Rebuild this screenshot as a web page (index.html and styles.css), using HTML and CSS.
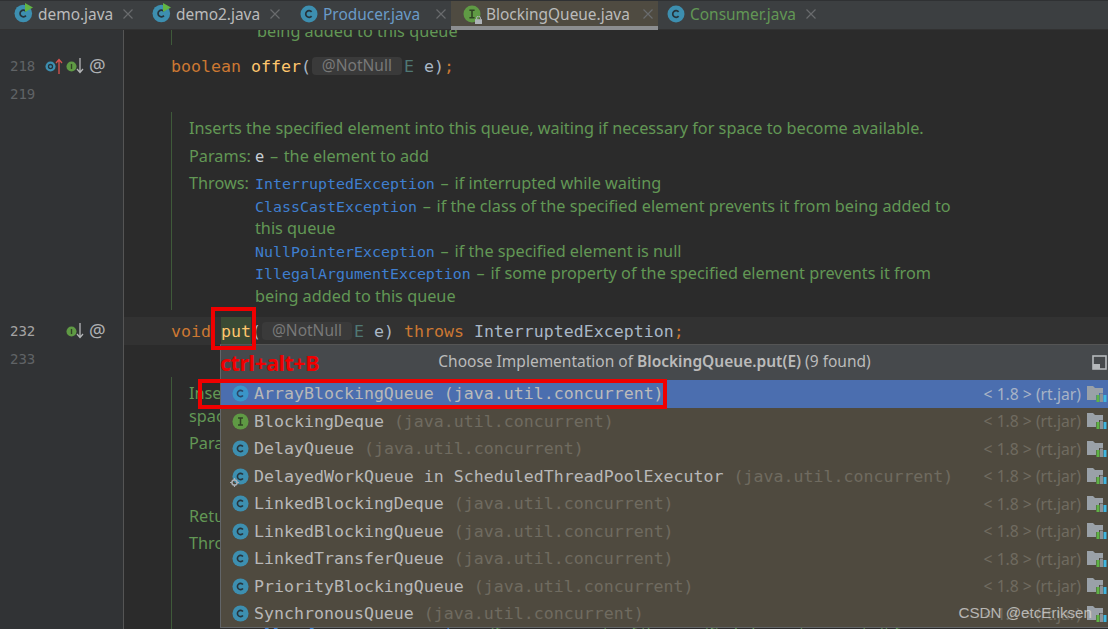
FILE: index.html
```html
<!DOCTYPE html>
<html lang="en">
<head>
<meta charset="utf-8">
<title>BlockingQueue.java</title>
<link rel="stylesheet" href="styles.css">
</head>
<body>
<svg class="defs" xmlns="http://www.w3.org/2000/svg">
  <symbol id="ic-c" viewBox="0 0 18 18"><circle cx="9" cy="9" r="8.5" fill="#3d8fb0"/><path d="M11.6 6.9A3.3 3.3 0 1 0 11.6 11.1" fill="none" stroke="#26343c" stroke-width="1.7"/></symbol>
  <symbol id="ic-c-sel" viewBox="0 0 18 18"><circle cx="9" cy="9" r="8.5" fill="#3a95c8"/><path d="M11.6 6.9A3.3 3.3 0 1 0 11.6 11.1" fill="none" stroke="#2b4566" stroke-width="1.7"/></symbol>
  <symbol id="ic-i" viewBox="0 0 18 18"><circle cx="9" cy="9" r="8.5" fill="#5f9a44"/><path d="M6.4 5.2h5.2M6.4 12.8h5.2M9 5.2v7.6" fill="none" stroke="#2f4224" stroke-width="1.6"/></symbol>
  <symbol id="ic-run" viewBox="0 0 20 20"><circle cx="9.3" cy="10.5" r="8.8" fill="#3d8fb0"/><path d="M11.9 8.4A3.3 3.3 0 1 0 11.9 12.6" fill="none" stroke="#26343c" stroke-width="1.7"/><path d="M11 0v9l8-4.5z" fill="#62b543"/></symbol>
  <symbol id="ic-lock" viewBox="0 0 7 8"><rect x="0" y="3.2" width="7" height="4.8" fill="#aeb3b8"/><path d="M1.6 3.4V2a1.9 1.9 0 0 1 3.8 0v1.4" fill="none" stroke="#aeb3b8"/></symbol>
  <symbol id="ic-x" viewBox="0 0 10 10"><path d="M.5.5l9 9M9.5.5l-9 9" stroke="#696b6d" stroke-width="1.2" fill="none"/></symbol>
  <symbol id="ic-folder" viewBox="0 0 20 16"><path d="M0 0h6l2 2h8v5h-4v2h-3v5H0z" fill="#9aa1a8"/><rect x="9.5" y="9" width="3" height="7" fill="#5fb347"/><rect x="13" y="7.5" width="3" height="8.5" fill="#8b9096"/><rect x="16.5" y="9" width="3" height="7" fill="#40b6e0"/></symbol>
  <symbol id="ic-gear" viewBox="0 0 9 9"><circle cx="4.5" cy="4.5" r="2.6" fill="none" stroke="#aab0b6" stroke-width="1.5"/><path d="M4.5 0v2M4.5 7v2M0 4.5h2M7 4.5h2" stroke="#aab0b6" stroke-width="1.2"/></symbol>
</svg>

<div class="app">
  <nav class="tabs">
    <div class="tab tab-a"><svg class="tab-run"><use href="#ic-run"/></svg><span class="tab-name">demo.java</span><svg class="tab-x"><use href="#ic-x"/></svg></div>
    <div class="tab tab-b"><svg class="tab-run"><use href="#ic-run"/></svg><span class="tab-name">demo2.java</span><svg class="tab-x"><use href="#ic-x"/></svg></div>
    <div class="tab tab-c"><svg class="tab-icon"><use href="#ic-c"/></svg><span class="tab-name blue">Producer.java</span><svg class="tab-x"><use href="#ic-x"/></svg></div>
    <div class="tab tab-d active"><span class="tab-iconwrap"><svg class="tab-icon"><use href="#ic-i"/></svg><svg class="tab-lock"><use href="#ic-lock"/></svg></span><span class="tab-name">BlockingQueue.java</span><svg class="tab-x"><use href="#ic-x"/></svg></div>
    <div class="tab tab-e"><svg class="tab-icon"><use href="#ic-c"/></svg><span class="tab-name green">Consumer.java</span><svg class="tab-x"><use href="#ic-x"/></svg></div>
  </nav>

  <main class="editor">
    <aside class="gutter">
      <div class="gutter-row">
        <span class="ln">218</span>
        <span class="marks">
          <svg class="m-circle" viewBox="0 0 12 12"><circle cx="6" cy="6" r="5.5" fill="#3d8fb0"/><circle cx="6" cy="6" r="2.2" fill="none" stroke="#26343c" stroke-width="1.4"/></svg>
          <svg class="m-arrow" viewBox="0 0 8 16"><path d="M4 16V2M1 5l3-3.5L7 5" fill="none" stroke="#d9534f" stroke-width="1.3"/></svg>
          <svg class="m-circle m-gap" viewBox="0 0 12 12"><circle cx="6" cy="6" r="5.5" fill="#5f9a44"/><path d="M6 3.2v5.6" stroke="#2f4224" stroke-width="1.5"/></svg>
          <svg class="m-arrow" viewBox="0 0 8 16"><path d="M4 0v14M1 11l3 3.5L7 11" fill="none" stroke="#b4b6b8" stroke-width="1.3"/></svg>
          <span class="at">@</span>
        </span>
      </div>
      <div class="gutter-row"><span class="ln">219</span></div>
      <div class="gutter-gap"></div>
      <div class="gutter-row">
        <span class="ln current">232</span>
        <span class="marks marks-indent">
          <svg class="m-circle" viewBox="0 0 12 12"><circle cx="6" cy="6" r="5.5" fill="#5f9a44"/><path d="M6 3.2v5.6" stroke="#2f4224" stroke-width="1.5"/></svg>
          <svg class="m-arrow" viewBox="0 0 8 16"><path d="M4 0v14M1 11l3 3.5L7 11" fill="none" stroke="#b4b6b8" stroke-width="1.3"/></svg>
          <span class="at">@</span>
        </span>
      </div>
      <div class="gutter-row"><span class="ln">233</span></div>
    </aside>

    <section class="code">
      <div class="doc doc-top"><div class="doc-tail">being added to this queue</div></div>

      <div class="line"><span class="kw">boolean</span> <span class="fn">offer</span><span class="pn">(</span><span class="hint">@NotNull</span><span class="ty">E</span> <span class="pn">e)</span><span class="kw">;</span></div>
      <div class="line"></div>

      <div class="doc doc-mid">
        <p>Inserts the specified element into this queue, waiting if necessary for space to become available.</p>
        <div class="doc-field"><span>Params:</span><div><div><span class="arg">e</span> <span class="sep">–</span> the element to add</div></div></div>
        <div class="doc-field"><span>Throws:</span><div>
          <div><span class="lnk">InterruptedException</span> <span class="sep">–</span> if interrupted while waiting</div>
          <div><span class="lnk">ClassCastException</span> <span class="sep">–</span> if the class of the specified element prevents it from being added to</div>
          <div>this queue</div>
          <div><span class="lnk">NullPointerException</span> <span class="sep">–</span> if the specified element is null</div>
          <div><span class="lnk">IllegalArgumentException</span> <span class="sep">–</span> if some property of the specified element prevents it from</div>
          <div>being added to this queue</div>
        </div></div>
      </div>

      <div class="line current-line"><span class="kw">void</span> <span class="fn put">put</span><span class="pn">(</span><span class="hint">@NotNull</span><span class="ty">E</span> <span class="pn">e)</span> <span class="kw">throws</span> <span class="pn">InterruptedException</span><span class="kw">;</span></div>
      <div class="line-empty"></div>

      <div class="doc doc-low">
        <p class="tight">Inserts the specified element into this queue, waiting up to the specified wait time if necessary for</p>
        <p>space to become available.</p>
        <div class="doc-field"><span>Params:</span><div>
          <div><span class="arg">e</span> <span class="sep">–</span> the element to add</div>
          <div><span class="arg">timeout</span> <span class="sep">–</span> how long to wait before giving up</div>
          <div><span class="arg">unit</span> <span class="sep">–</span> a TimeUnit determining how to interpret the timeout parameter</div>
        </div></div>
        <p>Returns: true if successful, or false if the specified waiting time elapses</p>
        <div class="doc-field"><span>Throws:</span><div>
          <div><span class="lnk">InterruptedException</span> <span class="sep">–</span> if interrupted while waiting</div>
          <div><span class="lnk">ClassCastException</span> <span class="sep">–</span> if the class of the specified element prevents it</div>
          <div>this queue</div>
          <div><span class="lnk">NullPointerException</span> <span class="sep">–</span> if the specified element is null</div>
          <div><span class="lnk">IllegalArgumentException</span> <span class="sep">–</span> if some property of the specified element prevents it from</div>
        </div></div>
      </div>
    </section>
  </main>

  <div class="popup">
    <header class="popup-head">
      <span class="popup-title">Choose Implementation of <b>BlockingQueue.put(E)</b> (9 found)</span>
      <svg class="popup-pin" viewBox="0 0 15 15"><rect x="1" y="1" width="13" height="13" fill="none" stroke="#b5b8bb" stroke-width="1.6"/><rect x="1" y="9" width="7" height="5" fill="#b5b8bb"/></svg>
    </header>
    <ul class="popup-list">
      <li class="row selected"><svg class="row-icon"><use href="#ic-c-sel"/></svg><span class="row-name">ArrayBlockingQueue</span><span class="row-pkg">(java.util.concurrent)</span><span class="row-lib">&lt; 1.8 &gt; (rt.jar)</span><svg class="row-folder"><use href="#ic-folder"/></svg></li>
      <li class="row"><svg class="row-icon"><use href="#ic-i"/></svg><span class="row-name">BlockingDeque</span><span class="row-pkg">(java.util.concurrent)</span><span class="row-lib">&lt; 1.8 &gt; (rt.jar)</span><svg class="row-folder"><use href="#ic-folder"/></svg></li>
      <li class="row"><svg class="row-icon"><use href="#ic-c"/></svg><span class="row-name">DelayQueue</span><span class="row-pkg">(java.util.concurrent)</span><span class="row-lib">&lt; 1.8 &gt; (rt.jar)</span><svg class="row-folder"><use href="#ic-folder"/></svg></li>
      <li class="row"><span class="row-iconwrap"><svg class="row-icon"><use href="#ic-c"/></svg><svg class="row-gear"><use href="#ic-gear"/></svg></span><span class="row-name">DelayedWorkQueue in ScheduledThreadPoolExecutor</span><span class="row-pkg">(java.util.concurrent)</span><span class="row-lib">&lt; 1.8 &gt; (rt.jar)</span><svg class="row-folder"><use href="#ic-folder"/></svg></li>
      <li class="row"><svg class="row-icon"><use href="#ic-c"/></svg><span class="row-name">LinkedBlockingDeque</span><span class="row-pkg">(java.util.concurrent)</span><span class="row-lib">&lt; 1.8 &gt; (rt.jar)</span><svg class="row-folder"><use href="#ic-folder"/></svg></li>
      <li class="row"><svg class="row-icon"><use href="#ic-c"/></svg><span class="row-name">LinkedBlockingQueue</span><span class="row-pkg">(java.util.concurrent)</span><span class="row-lib">&lt; 1.8 &gt; (rt.jar)</span><svg class="row-folder"><use href="#ic-folder"/></svg></li>
      <li class="row"><svg class="row-icon"><use href="#ic-c"/></svg><span class="row-name">LinkedTransferQueue</span><span class="row-pkg">(java.util.concurrent)</span><span class="row-lib">&lt; 1.8 &gt; (rt.jar)</span><svg class="row-folder"><use href="#ic-folder"/></svg></li>
      <li class="row"><svg class="row-icon"><use href="#ic-c"/></svg><span class="row-name">PriorityBlockingQueue</span><span class="row-pkg">(java.util.concurrent)</span><span class="row-lib">&lt; 1.8 &gt; (rt.jar)</span><svg class="row-folder"><use href="#ic-folder"/></svg></li>
      <li class="row"><svg class="row-icon"><use href="#ic-c"/></svg><span class="row-name">SynchronousQueue</span><span class="row-pkg">(java.util.concurrent)</span><span class="row-lib">&lt; 1.8 &gt; (rt.jar)</span><svg class="row-folder"><use href="#ic-folder"/></svg></li>
    </ul>
  </div>

  <div class="mark-put"></div>
  <div class="mark-row"></div>
  <div class="mark-label">ctrl+alt+B</div>
  <div class="watermark">CSDN @etcEriksen</div>
</div>
</body>
</html>
```

FILE: styles.css
```css
* { box-sizing: border-box; }
html, body { margin: 0; height: 100%; }
body { background: #2b2b2b; overflow: hidden; font-family: "Noto Sans", sans-serif; }
.defs { display: none; }
.app { position: relative; width: 1108px; height: 629px; overflow: hidden; display: flex; flex-direction: column; }

/* tabs */
.tabs { display: flex; height: 30px; flex: none; background: #3c3f41; border-top: 1px solid #2f3133; border-bottom: 1px solid #323232; color: #bbbbbb; font-size: 15.45px; white-space: nowrap; }
.tab { display: flex; align-items: center; height: 29px; padding-bottom: 4px; }
.tab-a { width: 138px; padding-left: 14px; }
.tab-b { width: 147px; padding-left: 14px; }
.tab-c { width: 166px; padding-left: 15px; }
.tab-d { width: 207px; padding-left: 12px; }
.tab-e { width: 163px; padding-left: 9px; }
.tab.active { background: #4f4b41; border-bottom: 4px solid #8c8e90; padding-bottom: 0; height: 29px; }
.tab-icon { width: 18px; height: 18px; flex: none; }
.tab-run { width: 20px; height: 20px; flex: none; margin-top: -2px; }
.tab-iconwrap { position: relative; display: flex; flex: none; width: 18px; height: 18px; }
.tab-lock { position: absolute; right: -1px; bottom: -1px; width: 7px; height: 8px; }
.tab-name { margin-left: 5px; width: 0; flex: 1 1 auto; }
.tab-run + .tab-name { margin-left: 4px; }
.tab-x { width: 10px; height: 10px; flex: none; margin-right: 5px; }
.blue { color: #6a9bc8; }
.green { color: #629755; }

/* editor */
.editor { display: flex; flex: 1 1 auto; min-height: 0; }
.gutter { width: 124px; flex: none; background: #313335; border-right: 1px solid #555; padding-top: 22.25px; }
.gutter-row { display: flex; align-items: center; height: 27.5px; padding-left: 10px; }
.gutter-gap { height: 210px; }
.ln { font-family: "DejaVu Sans Mono", monospace; font-size: 14px; color: #606366; width: 26px; flex: none; }
.ln.current { color: #a4a3a3; }
.marks { display: flex; align-items: center; margin-left: 9px; }
.marks-indent { margin-left: 30px; }
.m-circle { width: 11px; height: 11px; flex: none; }
.m-gap { margin-left: 3px; }
.m-arrow { width: 8px; height: 16px; flex: none; margin-left: -1px; }
.at { font-size: 18.5px; line-height: 1; color: #afb1b3; margin-left: 5px; margin-top: -2px; }

.code { flex: 1 1 auto; min-width: 0; overflow: hidden; padding-left: 47px; color: #a9b7c6; }
.doc { border-left: 1px solid #3f5a3a; padding-left: 17px; color: #629755; font-size: 16.25px; line-height: 22.5px; white-space: nowrap; }
.doc p { margin: 0 0 5px; }
.doc p.tight { margin-bottom: 0; }
.doc-top { display: flow-root; height: 15px; margin-bottom: 7.25px; }
.doc-tail { margin: -10px 0 0 68px; }
.doc-mid { margin-top: 4.75px; height: 198px; padding-top: 5px; }
.doc-low { margin-top: 4.25px; height: 300px; padding-top: 5.75px; }
.doc-field { display: grid; grid-template-columns: 66px 1fr; margin-bottom: 5px; }
.doc-field > div > div { height: 22.5px; }
.arg { color: #c8ced4; }
.sep { margin: 0 1.5px; }
.lnk { font-family: "DejaVu Sans Mono", monospace; font-size: 14.95px; color: #3f7fd0; }

.line { height: 27.5px; line-height: 29.5px; font-family: "DejaVu Sans Mono", monospace; font-size: 16.6px; white-space: pre; }
.current-line { margin: 7.25px 0 0 -47px; padding-left: 47px; background: #323232; }
.line-empty { height: 27.5px; }
.kw { color: #cc7832; }
.fn { color: #ffc66d; }
.pn { color: #a9b7c6; }
.ty { color: #507874; }
.put { display: inline-block; height: 27.5px; background: #3a4a34; }
.hint { display: inline-block; width: 90px; height: 18px; line-height: 17px; margin: 0 2px 0 1px; vertical-align: 1px; text-align: center; background: #3a3a3a; border-radius: 4px; color: #787878; font-family: "Noto Sans", sans-serif; font-size: 15.5px; }

/* popup */
.popup { position: absolute; left: 220px; top: 344px; right: 0; height: 284px; background: #4f4a3f; border: 1px solid #626568; border-right: 0; border-top-color: #555; }
.popup-head { display: flex; align-items: center; justify-content: center; height: 35px; background: #46494c; color: #bbbbbb; font-size: 15.5px; position: relative; padding: 0 20px 3px 0; }
.popup-title b { font-weight: 600; }
.popup-pin { position: absolute; right: 1px; top: 10px; width: 15px; height: 15px; }
.popup-list { list-style: none; margin: 0; padding: 0; }
.row { display: flex; align-items: center; height: 27.5px; padding-left: 11px; font-family: "DejaVu Sans Mono", monospace; font-size: 16.6px; color: #b8b8b8; white-space: pre; }
.row-icon { width: 17px; height: 17px; flex: none; }
.row-iconwrap { position: relative; display: flex; flex: none; }
.row-gear { position: absolute; left: -2px; bottom: -2px; width: 9px; height: 9px; }
.row-name { margin-left: 5px; }
.row-pkg { margin-left: 10px; color: #6f6b60; }
.row-lib { margin-left: auto; font-family: "Noto Sans", sans-serif; font-size: 15.7px; color: #6f6b60; }
.row-folder { width: 20px; height: 16px; flex: none; margin-left: 6px; margin-right: 1px; }
.selected { background: #4b6eaf; }
.selected .row-pkg { color: #bbbbbb; }
.selected .row-lib { color: #a7b3c6; }

/* annotations */
.mark-put, .mark-row { position: absolute; border: 4px solid #f00000; }
.mark-put { left: 211px; top: 307px; width: 45px; height: 43px; }
.mark-row { left: 198px; top: 379px; width: 469px; height: 30px; }
.mark-label { position: absolute; left: 220px; top: 349px; color: #f00000; font-family: "Noto Sans", sans-serif; font-weight: 700; font-size: 21.5px; letter-spacing: -0.5px; line-height: 28px; }
.watermark { position: absolute; right: 16px; top: 603px; font-family: "Liberation Sans", sans-serif; font-size: 15.2px; line-height: 20px; color: rgba(225, 225, 225, 0.72); }
```
